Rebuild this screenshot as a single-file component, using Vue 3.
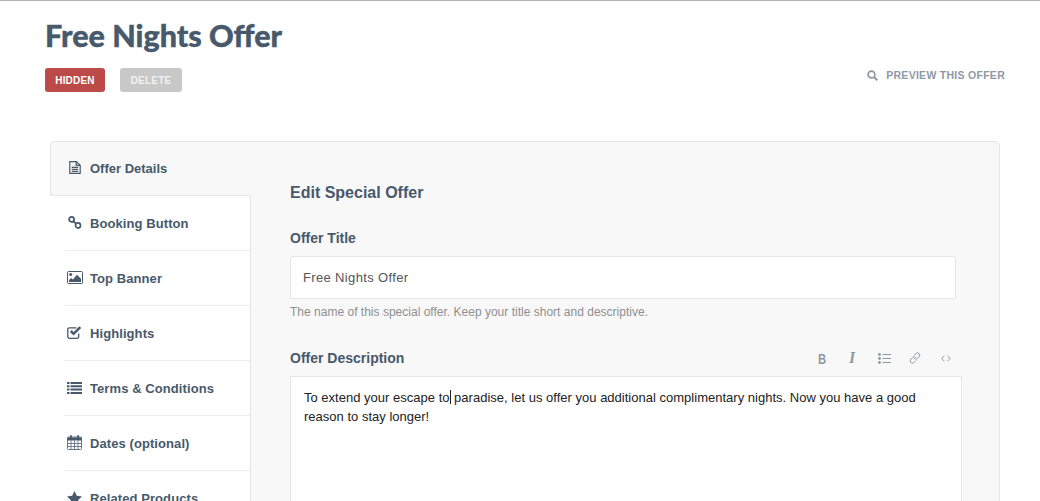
<script setup>
const tabs = [
  { label: 'Offer Details', icon: 'doc', active: true },
  { label: 'Booking Button', icon: 'chain' },
  { label: 'Top Banner', icon: 'image' },
  { label: 'Highlights', icon: 'check' },
  { label: 'Terms & Conditions', icon: 'list' },
  { label: 'Dates (optional)', icon: 'cal' },
  { label: 'Related Products', icon: 'star' }
]
</script>

<template>
  <div class="page">
    <header class="head">
      <div>
        <h1 class="title">Free Nights Offer</h1>
        <div class="actions">
          <button class="btn red">HIDDEN</button>
          <button class="btn grey">DELETE</button>
        </div>
      </div>
      <a class="preview">
        <svg width="11" height="11" viewBox="0 0 11 11" fill="none" stroke="#8d99a6" stroke-width="1.7"><circle cx="4.5" cy="4.5" r="3.4"/><path d="M7 7l3.3 3.3" stroke-width="2"/></svg>
        <span>PREVIEW THIS OFFER</span>
      </a>
    </header>
    <section class="card">
      <nav class="side">
        <div v-for="t in tabs" :key="t.label" class="tab" :class="{ active: t.active }">
          <span class="ico">
            <svg v-if="t.icon === 'doc'" width="12" height="13" viewBox="0 0 12 13" fill="none" stroke="#47596b" stroke-width="1.2"><path d="M.8.6h6.500l3.900 3.700v8.100H.8z"/><path d="M7.200.8v3.600h3.800M2.800 6.400h6.400M2.800 8.300h6.400M2.800 10.300h6.400"/></svg>
            <svg v-else-if="t.icon === 'chain'" width="14" height="13" viewBox="0 0 14 13" fill="none" stroke="#47596b" stroke-width="1.700"><circle cx="3.600" cy="3.400" r="2.500"/><circle cx="10" cy="9.400" r="2.500"/><path d="M5 5l3.600 3.200"/></svg>
            <svg v-else-if="t.icon === 'image'" width="16" height="13" viewBox="0 0 16 13"><rect x=".5" y=".5" width="15" height="12" rx="1" fill="none" stroke="#47596b"/><circle cx="3.700" cy="3.500" r="1.500" fill="#47596b"/><path d="M2 10.900V9l2.200-2 1.600 1.400L10 3.800l4 4v3.100z" fill="#47596b"/></svg>
            <svg v-else-if="t.icon === 'check'" width="15" height="13" viewBox="0 0 15 13" fill="none" stroke="#47596b"><path d="M11.700 7.500v3.200a1.600 1.600 0 0 1-1.600 1.600H2.400A1.600 1.600 0 0 1 .8 10.700V3.400a1.600 1.600 0 0 1 1.600-1.600H9.500" stroke-width="1.300"/><path d="M3.800 5l2.800 2.800L13.300 1.200" stroke-width="2.500"/></svg>
            <svg v-else-if="t.icon === 'list'" width="15" height="12" viewBox="0 0 15 12" fill="#47596b"><path d="M0 0h2.500v2H0zM3.500 0H15v2H3.500zM0 3.300h2.500v2H0zM3.500 3.300H15v2H3.500zM0 6.600h2.500v2H0zM3.500 6.600H15v2H3.500zM0 9.900h2.500v2H0zM3.500 9.900H15v2H3.500z"/></svg>
            <svg v-else-if="t.icon === 'cal'" width="15" height="15" viewBox="0 0 15 15"><rect x=".5" y="2" width="14" height="12.500" rx="1" fill="none" stroke="#64748a"/><path d="M.5 2.500h14V5.500H.5z" fill="#47596b"/><path d="M3 .3h1.800v3H3zM10.200 .3H12v3h-1.800z" fill="#47596b"/><path d="M.5 8.500h14M.5 11.500h14M4 5.500v9M7.500 5.500v9M11 5.500v9" stroke="#64748a" stroke-width=".9" fill="none"/></svg>
            <svg v-else width="15" height="14" viewBox="0 0 15 14" fill="#47596b"><path d="M7.500 0l2.300 4.700 5.200.8-3.800 3.600.9 5.200-4.600-2.500-4.600 2.500.9-5.200L0 5.500l5.200-.8z"/></svg>
          </span>
          <span class="lab">{{ t.label }}</span>
        </div>
      </nav>
      <main class="main">
        <h2 class="h2">Edit Special Offer</h2>
        <label class="label">Offer Title</label>
        <div class="input">Free Nights Offer</div>
        <p class="hint">The name of this special offer. Keep your title short and descriptive.</p>
        <div class="desc-head">
          <label class="label flat">Offer Description</label>
          <div class="tools">
            <span class="tool b">B</span>
            <span class="tool i">I</span>
            <svg class="tool-list" width="13" height="11" viewBox="0 0 13 11" fill="#8d99a6"><circle cx="1.500" cy="1.500" r="1.400"/><circle cx="1.500" cy="5.500" r="1.400"/><circle cx="1.500" cy="9.500" r="1.400"/><path d="M4.500 1h8.500v1.100H4.500zM4.500 5h8.500v1.100H4.500zM4.500 9h8.500v1.100H4.500z"/></svg>
            <svg width="12" height="12" viewBox="0 0 12 12" fill="none" stroke="#8d99a6" stroke-width="1"><path d="M5 3.500l1.800-1.900a2.200 2.200 0 0 1 3.300 3.200L8.400 6.500a2.200 2.200 0 0 1-3.100 0"/><path d="M7 8.500l-1.800 1.900a2.200 2.200 0 0 1-3.300-3.200L3.600 5.500a2.200 2.200 0 0 1 3.100 0"/></svg>
            <svg width="10" height="7" viewBox="0 0 10 7" fill="none" stroke="#8d99a6" stroke-width="1"><path d="M3.300 .8L.8 3.500l2.500 2.700M6.700 .8l2.500 2.700-2.500 2.700"/></svg>
          </div>
        </div>
        <div class="editor">To extend your escape to<span class="caret"></span> paradise, let us offer you additional complimentary nights. Now you have a good reason to stay longer!</div>
      </main>
    </section>
  </div>
</template>

<style>
html, body { margin: 0; height: 501px; overflow: hidden; background: #fff; }
</style>

<style scoped>
.page {
  height: 501px;
  overflow: hidden;
  box-sizing: border-box;
  border-top: 1px solid #b3b3b3;
  font-family: "Liberation Sans", Arial, sans-serif;
  color: #47596b;
}
.head {
  display: flex;
  justify-content: space-between;
  align-items: flex-start;
  padding: 0 35px 0 45px;
  height: 140px;
}
.title {
  margin: 15px 0 0;
  font: 900 30.500px/38px Lato, sans-serif;
  -webkit-text-stroke: .4px #47596b;
  color: #47596b;
}
.actions { display: flex; gap: 15px; margin-top: 14px; }
.btn {
  height: 24px;
  border: 0;
  border-radius: 3px;
  padding: 0;
  color: #fff;
  font: 700 10px "Liberation Sans", Arial, sans-serif;
  letter-spacing: .2px;
}
.red { width: 60px; background: #bc4a48; }
.grey { width: 62px; background: #c8c8c8; color: #f1f1f1; }
.preview {
  display: flex;
  align-items: center;
  gap: 8px;
  margin-top: 68px;
  font-size: 10.500px;
  font-weight: 700;
  letter-spacing: .28px;
  color: #8d99a6;
}
.card {
  display: flex;
  width: 950px;
  margin-left: 50px;
  box-sizing: border-box;
  height: 400px;
  background: #f8f8f8;
  border: 1px solid #e6e6e6;
  border-bottom: 0;
  border-radius: 5px 5px 0 0;
}
.side { width: 200px; flex: none; }
.tab {
  display: flex;
  align-items: center;
  height: 55px;
  box-sizing: border-box;
  margin-left: -1px;
  padding-left: 15px;
  background: #fff;
  border-right: 1px solid #e6e6e6;
  position: relative;
  font-size: 13px;
  font-weight: 700;
  letter-spacing: .08px;
}
.tab::after {
  content: "";
  position: absolute;
  left: 15px;
  right: 0;
  bottom: 0;
  height: 1px;
  background: #ececec;
}
.tab.active {
  height: 54px;
  background: #f8f8f8;
  border-right: 0;
  border-left: 1px solid #e6e6e6;
  border-bottom: 1px solid #e6e6e6;
  border-radius: 4px 0 0 5px;
  padding-left: 14px;
  letter-spacing: 0;
}
.tab.active::after { display: none; }
.ico { width: 19px; margin-right: 6px; flex: none; display: flex; align-items: center; justify-content: center; transform: translateY(-1px); }
.main { flex: 1; padding: 42px 38px 0 39px; min-width: 0; }
.h2 { margin: 0; font-size: 16px; line-height: 18px; font-weight: 700; }
.label { display: block; margin-top: 28px; font-size: 14px; line-height: 16px; font-weight: 700; }
.label.flat { margin: 0; }
.input {
  margin-top: 10px;
  width: 666px;
  height: 43px;
  box-sizing: border-box;
  padding: 0 12px;
  display: flex;
  align-items: center;
  background: #fff;
  border: 1px solid #e6e6e6;
  border-radius: 2px;
  font-size: 13px;
  letter-spacing: .35px;
  color: #555;
}
.hint { margin: 6px 0 0; font-size: 12px; line-height: 14px; color: #8f8f8f; letter-spacing: .01px; }
.desc-head {
  display: flex;
  justify-content: space-between;
  align-items: center;
  margin-top: 31px;
  width: 661px;
  height: 16px;
}
.tools { display: flex; align-items: center; gap: 20px; color: #8d99a6; }
.tool { font-weight: 700; }
.tool.b { font-size: 15px; width: 8px; display: inline-block; transform: scaleX(.75); transform-origin: left; margin-right: 3px; }
.tool.i { font-family: "Liberation Serif", serif; font-style: italic; font-size: 16px; width: 8px; margin-right: 1px; }
.tool-list { margin-right: -2px; }
.editor {
  margin-top: 10px;
  width: 672px;
  height: 200px;
  box-sizing: border-box;
  padding: 11px 13px;
  background: #fff;
  border: 1px solid #e6e6e6;
  font-size: 13px;
  line-height: 19px;
  letter-spacing: .01px;
  color: #222;
}
.caret { display: inline-block; width: 1px; height: 14px; background: #222; vertical-align: -2px; }
</style>
